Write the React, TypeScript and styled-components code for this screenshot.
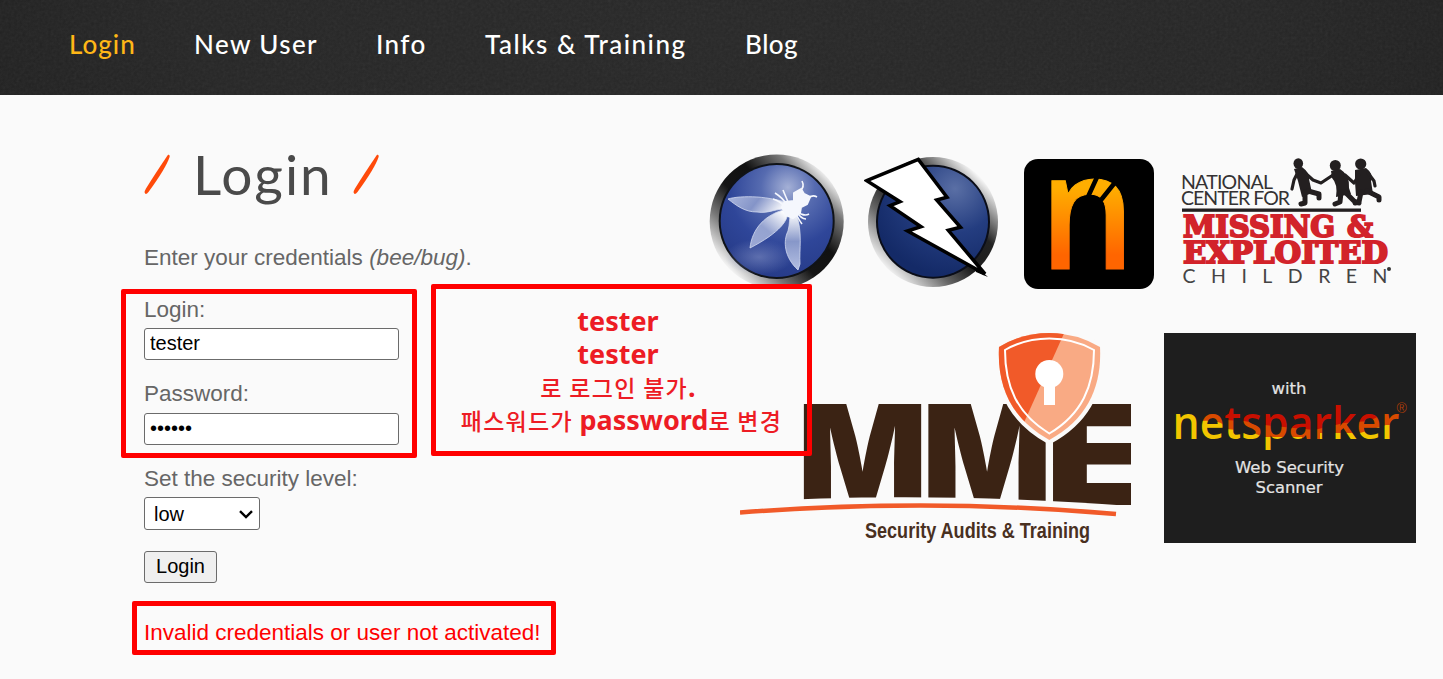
import React from "react";
import styled, { createGlobalStyle } from "styled-components";

const Global = createGlobalStyle`
  *, *::before, *::after { box-sizing: border-box; }
  html, body { margin: 0; padding: 0; }
  body {
    background: #fafafa;
    font-family: "Liberation Sans", Arial, sans-serif;
    overflow: hidden;
  }
`;

const Page = styled.div`
  position: relative;
  width: 1443px;
  height: 679px;
  overflow: hidden;
`;

const Header = styled.header`
  position: relative;
  height: 95px;
  background: radial-gradient(ellipse 900px 260px at 50% 30%, #282828 0%, #262626 60%, #1e1e1e 100%);
`;

const Grain = styled.svg`
  position: absolute;
  inset: 0;
  width: 100%;
  height: 100%;
  opacity: 0.07;
`;

const Nav = styled.nav`
  position: relative;
  display: flex;
  height: 87px;
  align-items: center;
  padding-left: 69px;
`;

const NavLink = styled.a<{ $width: number; $spacing: number; $active?: boolean }>`
  width: ${(p) => p.$width}px;
  font: 500 26px/30px Lato, sans-serif;
  letter-spacing: ${(p) => p.$spacing}px;
  color: ${(p) => (p.$active ? "#ffb717" : "#fff")};
  white-space: nowrap;
  text-decoration: none;
`;

const Main = styled.main`
  display: flex;
  align-items: flex-start;
  padding-left: 144px;
`;

const LoginColumn = styled.section`
  width: 565px;
  padding-top: 56px;
`;

const Title = styled.h1`
  display: flex;
  align-items: flex-start;
  gap: 22px;
  height: 93px;
  margin: 0;
  padding-top: 3px;
  color: #4a4a4a;
  font: 400 55px/54px Lato, sans-serif;
`;

const TitleText = styled.span`
  width: 138px;
  margin-top: -7px;
  letter-spacing: 2px;
`;

const Intro = styled.p`
  margin: 0 0 24px;
  font-size: 22.5px;
  line-height: 28px;
  color: #666;
`;

const Label = styled.label<{ $gap: number }>`
  display: block;
  margin-bottom: ${(p) => p.$gap}px;
  font-size: 22.5px;
  line-height: 28px;
  color: #666;
`;

const Field = styled.input`
  display: block;
  width: 255px;
  height: 32px;
  margin: 0 0 20px;
  padding: 0 5px 2px;
  border: 1px solid #6b6b6b;
  border-radius: 3px;
  background: #fff;
  color: #000;
  font: 20px "Liberation Sans", Arial, sans-serif;
`;

const SelectWrap = styled.div`
  display: flex;
  align-items: center;
  justify-content: space-between;
  width: 116px;
  height: 33px;
  margin-bottom: 21px;
  padding: 1px 6px 0 9px;
  border: 1px solid #6b6b6b;
  border-radius: 3px;
  background: #fff;
  color: #000;
  font-size: 20px;
`;

const Submit = styled.button`
  display: block;
  width: 73px;
  height: 32px;
  margin: 0 0 36px;
  padding: 0 0 2px;
  border: 1px solid #6b6b6b;
  border-radius: 3px;
  background: #efefef;
  color: #000;
  font: 20px "Liberation Sans", Arial, sans-serif;
`;

const ErrorText = styled.p`
  margin: 0;
  font-size: 22.5px;
  line-height: 28px;
  color: #f00;
  white-space: nowrap;
`;

const Partners = styled.section`
  display: flex;
  flex-direction: column;
  gap: 44px;
  padding-top: 58px;
`;

const PartnerRow = styled.div<{ $indent?: number; $align?: string }>`
  display: flex;
  align-items: ${(p) => p.$align || "flex-end"};
  padding-left: ${(p) => p.$indent || 0}px;
`;

const Logo = styled.svg<{ $gap?: number }>`
  display: block;
  flex: none;
  margin-left: ${(p) => p.$gap || 0}px;
`;

const Highlight = styled.div<{ $x: number; $y: number; $w: number; $h: number }>`
  position: absolute;
  left: ${(p) => p.$x}px;
  top: ${(p) => p.$y}px;
  width: ${(p) => p.$w}px;
  height: ${(p) => p.$h}px;
  border: 5px solid #f00;
  border-radius: 2px;
`;

const Note = styled(Highlight)`
  padding: 15px 0 0 0;
  text-align: center;
  color: #ed1c24;
  font: 700 27px/33px "Noto Sans", "Noto Sans CJK KR", sans-serif;
  white-space: nowrap;
`;

const NoteLine = styled.div<{ $shift?: number }>`
  height: 33px;
  padding-right: ${(p) => p.$shift || 0}px;
`;

const Ko = styled.span`
  font: 500 23px/31px "Noto Sans CJK KR", sans-serif;
  letter-spacing: 1.3px;
`;

const Slash = () => (
  <svg width="27" height="41" viewBox="0 0 27 41">
    <path d="M24 0.800 Q26 0.300 25.600 3 Q22 14 4.500 38 Q1.500 41.500 0.600 38.500 Q0.500 37 2 34.500 Q11 20 24 0.800 Z" fill="#ff4a0a" />
  </svg>
);

const BeeLogo = () => (
  <Logo width="136" height="136" viewBox="0 0 136 136">
    <defs>
      <linearGradient id="beeRim" x1="0.12" y1="0.85" x2="0.86" y2="0.12">
        <stop offset="0" stopColor="#fff" />
        <stop offset="0.22" stopColor="#777" />
        <stop offset="0.42" stopColor="#151515" />
        <stop offset="0.62" stopColor="#111" />
        <stop offset="0.84" stopColor="#777" />
        <stop offset="1" stopColor="#fff" />
      </linearGradient>
      <radialGradient id="beeBlue" cx="0.6" cy="0.2" r="0.8">
        <stop offset="0" stopColor="#a4b0d6" />
        <stop offset="0.3" stopColor="#566bb0" />
        <stop offset="0.65" stopColor="#2f4699" />
        <stop offset="1" stopColor="#273c8a" />
      </radialGradient>
      <radialGradient id="beeGlow">
        <stop offset="0" stopColor="#7f8dc2" stopOpacity="0.6" />
        <stop offset="1" stopColor="#7f8dc2" stopOpacity="0" />
      </radialGradient>
      <linearGradient id="wingA" x1="0" y1="0" x2="1" y2="0.2">
        <stop offset="0" stopColor="#aab6dd" />
        <stop offset="0.5" stopColor="#8494c8" />
        <stop offset="1" stopColor="#fff" />
      </linearGradient>
      <linearGradient id="wingB" x1="0" y1="1" x2="0.8" y2="0">
        <stop offset="0" stopColor="#9ba8d5" />
        <stop offset="0.5" stopColor="#95a3d0" />
        <stop offset="1" stopColor="#fff" />
      </linearGradient>
      <linearGradient id="wingC" x1="0.5" y1="1" x2="0.5" y2="0">
        <stop offset="0" stopColor="#b4bfe2" />
        <stop offset="0.5" stopColor="#8797c9" />
        <stop offset="1" stopColor="#fff" />
      </linearGradient>
    </defs>
    <circle cx="67.700" cy="68.500" r="67" fill="url(#beeRim)" />
    <circle cx="67.700" cy="68" r="58" fill="#101318" />
    <circle cx="67.700" cy="68" r="56" fill="url(#beeBlue)" />
    <ellipse cx="50" cy="104" rx="34" ry="18" fill="url(#beeGlow)" />
    <path d="M19 46 C32 42 62 43 82 51 L81 56 C66 55 60 61 48 59 C36 59 28 53 19 46Z" fill="url(#wingA)" stroke="#d3daf0" strokeWidth="0.800" />
    <path d="M41 95 C43 76 56 61 78 56 C82 66 70 80 41 95Z" fill="url(#wingB)" stroke="#d3daf0" strokeWidth="0.800" />
    <path d="M89 117 C75 104 74 88 79 78 C81 71 80 65 82 60 L87 60 C94 80 90 96 91 111 Z" fill="url(#wingC)" stroke="#d3daf0" strokeWidth="0.800" />
    <g fill="#f5f7fd" stroke="#f5f7fd" strokeWidth="2" strokeLinejoin="round">
      <path d="M85 40 L92 36 L95 41 L101 44 L98 51 L92 54 L91 60 L84 65 L77 62 L73 54 L76 49 L85 48Z" />
      <path d="M91 38 Q96 34 93 28 M98 46 Q103 41 108 44 M78 52 Q74 45 66 40 M80 51 Q76 42 74 37 M75 53 Q71 48 64 46 M87 58 Q95 64 100 61 M87 58 Q92 66 97 66 M86 59 Q90 67 93 71" fill="none" strokeWidth="1.600" />
    </g>
  </Logo>
);

const BoltLogo = () => (
  <Logo width="134" height="134" viewBox="0 0 134 134" $gap={19}>
    <defs>
      <linearGradient id="boltRim" x1="0.12" y1="0.82" x2="0.82" y2="0.12">
        <stop offset="0" stopColor="#eee" />
        <stop offset="0.25" stopColor="#666" />
        <stop offset="0.45" stopColor="#1c1c1c" />
        <stop offset="0.7" stopColor="#222" />
        <stop offset="0.85" stopColor="#888" />
        <stop offset="1" stopColor="#f4f4f4" />
      </linearGradient>
      <radialGradient id="boltBlue" cx="0.7" cy="0.2" r="0.8">
        <stop offset="0" stopColor="#5a6fa5" />
        <stop offset="0.5" stopColor="#243d80" />
        <stop offset="1" stopColor="#142a67" />
      </radialGradient>
    </defs>
    <circle cx="69" cy="67" r="65" fill="url(#boltRim)" />
    <circle cx="69" cy="66.700" r="57" fill="#0a0d18" />
    <circle cx="69" cy="66.700" r="55" fill="url(#boltBlue)" />
    <path d="M108 108 L124 122 L112 117Z" fill="#000" />
    <path
      d="M2.700 25.700 L54.300 4.500 L83 42.300 L72.700 45 L96.500 72.300 L84.300 75.300 L121 119 L43.500 76 L57 71.700 L26 50.700 L36 46.700Z"
      fill="#fff" stroke="#000" strokeWidth="3.500"
    />
  </Logo>
);

const SparkLogo = () => (
  <Logo width="130" height="130" viewBox="0 0 130 130" $gap={26}>
    <defs>
      <linearGradient id="flame" x1="0" y1="-90" x2="0" y2="0" gradientUnits="userSpaceOnUse">
        <stop offset="0.1" stopColor="#ffae00" />
        <stop offset="0.85" stopColor="#ff6500" />
      </linearGradient>
    </defs>
    <rect width="130" height="130" rx="14" />
    <text transform="translate(15.500 109.500) scale(0.925 1)" fontFamily="Open Sans" fontWeight="600" fontSize="163" fill="url(#flame)" stroke="url(#flame)" strokeWidth="1">n</text>
    <path d="M63 40 L74 16 M77 41 L93 21" stroke="#000" strokeWidth="4.500" />
  </Logo>
);

const ChildrenLogo = () => (
  <Logo width="216" height="132" viewBox="0 0 216 132" $gap={26}>
    <g fill="#343233" fontFamily="Lato" fontSize="19.500">
      <text x="1" y="32" textLength="92">NATIONAL</text>
      <text x="1" y="48" textLength="109">CENTER FOR</text>
      <text x="2.500" y="126" textLength="205" fill="#444">CHILDREN</text>
    </g>
    <rect x="2" y="51.500" width="179" height="3.300" fill="#231f20" />
    <g fill="#d2232a" stroke="#d2232a" strokeWidth="2" fontFamily="DejaVu Serif" fontWeight="700" fontSize="30">
      <text x="3" y="80" textLength="152" lengthAdjust="spacingAndGlyphs">MISSING</text>
      <text x="167" y="80" textLength="26" lengthAdjust="spacingAndGlyphs">&amp;</text>
      <text x="3" y="105.500" textLength="205" lengthAdjust="spacingAndGlyphs">EXPLOITED</text>
    </g>
    <circle cx="209" cy="112" r="2" fill="#333" />
    <g fill="#231f20">
      <ellipse cx="118.300" cy="6.500" rx="4.800" ry="5.200" />
      <ellipse cx="155.300" cy="8.500" rx="5.500" ry="5.500" />
      <ellipse cx="180.700" cy="7" rx="5.600" ry="5.500" />
      <path d="M114 12 L122 10 Q130 16 129 22 L132 36 L122 40 L118 24Z M151 14 L160 12 Q170 18 169 31 L171 37 L156 40 Q158 27 152 21Z M175 13 L186 11 Q194 17 191 24 L193 37 L176 39 L175 25Z" />
    </g>
    <g fill="none" stroke="#231f20" strokeLinecap="round" strokeLinejoin="round">
      <path d="M118 15 L114 23 L112 32 M124 15 L133 23 L141 26 L153 18 M165 18 L174 26 L179 18 M188 16 L194 24 L195 29" strokeWidth="3.200" />
      <path d="M125 35 L125 46 L121 47 M128 34 L139 37 L139 41 M161 35 L160 45 L155 47 M165 35 L174 44 L179 46 M181 35 L179 45 L175 46 M187 34 L199 40 L199 43" strokeWidth="5" />
    </g>
  </Logo>
);

const SHIELD = "M309.300 0 Q282 0 259 14 C257 53 271 86 309.300 107 C348 86 362 53 360 14 Q336 0 309.300 0Z";

const MmeLogo = () => (
  <Logo width="391" height="214" viewBox="0 0 391 214">
    <defs>
      <clipPath id="shieldShade">
        <path d="M250 -4 H326 L282 94 H250Z" />
      </clipPath>
    </defs>
    <g fill="#3b2314" fontFamily="Inter" fontWeight="900" fontSize="139">
      <text x="57.500" y="172" textLength="130" lengthAdjust="spacingAndGlyphs">M</text>
      <text x="182" y="172" textLength="130" lengthAdjust="spacingAndGlyphs">M</text>
      <text x="305" y="172" textLength="105" lengthAdjust="spacingAndGlyphs">E</text>
    </g>
    <path d="M55 166.500 C150 162.500 270 163.500 391 173 V190 H55Z" fill="#fafafa" />
    <path d={SHIELD} fill="#fafafa" stroke="#fafafa" strokeWidth="8" />
    <path d={SHIELD} fill="#f9aa84" />
    <path d={SHIELD} fill="#f15a29" clipPath="url(#shieldShade)" />
    <path d="M309.300 5.500 Q285 5.500 265 17 C265 53 277 81 309.300 100.500 C342 81 354 53 354 17 Q334 5.500 309.300 5.500Z" fill="none" stroke="#fff" strokeWidth="2" />
    <circle cx="309.300" cy="41" r="14" fill="#fff" />
    <rect x="304" y="50" width="11" height="22" fill="#fff" />
    <path d="M0 179.500 C125 170 250 170 376 181" fill="none" stroke="#f15a29" strokeWidth="4.500" />
    <text x="125" y="205" textLength="225" lengthAdjust="spacingAndGlyphs" fontFamily="Liberation Sans Narrow, Liberation Sans" fontWeight="700" fontSize="22.500" fill="#49301f">
      Security Audits &amp; Training
    </text>
  </Logo>
);

const NetsparkerLogo = () => (
  <Logo width="252" height="210" viewBox="0 0 252 210" $gap={33}>
    <defs>
      <pattern id="heat" patternUnits="userSpaceOnUse" width="252" height="210">
        <rect width="252" height="210" fill="#f2c500" />
        <path d="M34 88 Q60 86 62 96 L84 98 L100 104 H138 V108 H156 V100 H196 L222 92 H252 V60 H34Z" fill="#d84a00" />
        <path d="M60 60 V87 L80 88 L100 92 L150 97 L180 90 L205 88 L222 80 L240 76 V60Z" fill="#c80f00" />
      </pattern>
    </defs>
    <rect width="252" height="210" fill="#1e1e1e" />
    <g fill="#e4e4e4" fontFamily="DejaVu Sans" fontSize="16.500" stroke="#e4e4e4" strokeWidth="0.200">
      <text x="107.500" y="61" textLength="35" lengthAdjust="spacingAndGlyphs">with</text>
      <text x="71" y="140" textLength="109" lengthAdjust="spacingAndGlyphs">Web Security</text>
      <text x="91.500" y="160" textLength="67" lengthAdjust="spacingAndGlyphs">Scanner</text>
    </g>
    <text x="8.500" y="106" textLength="227" lengthAdjust="spacingAndGlyphs" fontFamily="Open Sans" fontWeight="600" fontSize="45" fill="url(#heat)">netsparker</text>
    <text x="232.500" y="79.500" fontFamily="Liberation Sans" fontSize="14" fill="#a83c08">®</text>
  </Logo>
);

export default function App() {
  return (
    <Page>
      <Global />
      <Header>
        <Grain>
          <filter id="grain">
            <feTurbulence type="fractalNoise" baseFrequency="0.35" numOctaves="2" />
            <feColorMatrix type="saturate" values="0" />
          </filter>
          <rect width="100%" height="100%" filter="url(#grain)" />
        </Grain>
        <Nav>
          <NavLink $width={125} $spacing={1} $active>Login</NavLink>
          <NavLink $width={182} $spacing={1.4}>New User</NavLink>
          <NavLink $width={109} $spacing={1.4}>Info</NavLink>
          <NavLink $width={260} $spacing={1.5}>Talks &amp; Training</NavLink>
          <NavLink $width={60} $spacing={0.5}>Blog</NavLink>
        </Nav>
      </Header>
      <Main>
        <LoginColumn>
          <Title>
            <Slash />
            <TitleText>Login</TitleText>
            <Slash />
          </Title>
          <Intro>
            Enter your credentials <i>(bee/bug)</i>.
          </Intro>
          <Label $gap={4}>Login:</Label>
          <Field type="text" defaultValue="tester" />
          <Label $gap={5}>Password:</Label>
          <Field type="password" defaultValue="tester" />
          <Label $gap={4}>Set the security level:</Label>
          <SelectWrap>
            low
            <svg width="14" height="9" viewBox="0 0 14 9" fill="none" stroke="#000" strokeWidth="2.400">
              <path d="M1 1.200 L7 7.100 L13 1.200" />
            </svg>
          </SelectWrap>
          <Submit type="button">Login</Submit>
          <ErrorText>Invalid credentials or user not activated!</ErrorText>
        </LoginColumn>
        <Partners>
          <PartnerRow>
            <BeeLogo />
            <BoltLogo />
            <SparkLogo />
            <ChildrenLogo />
          </PartnerRow>
          <PartnerRow $indent={31} $align="flex-start">
            <MmeLogo />
            <NetsparkerLogo />
          </PartnerRow>
        </Partners>
      </Main>
      <Highlight $x={121} $y={289} $w={296} $h={169} />
      <Note $x={431} $y={284} $w={381} $h={172}>
        <NoteLine $shift={7}>tester</NoteLine>
        <NoteLine $shift={7}>tester</NoteLine>
        <NoteLine $shift={7}>
          <Ko>로 로그인 불가</Ko>.
        </NoteLine>
        <NoteLine>
          <Ko>패스워드가 </Ko>password<Ko>로 변경</Ko>
        </NoteLine>
      </Note>
      <Highlight $x={132} $y={601} $w={424} $h={54} />
    </Page>
  );
}
